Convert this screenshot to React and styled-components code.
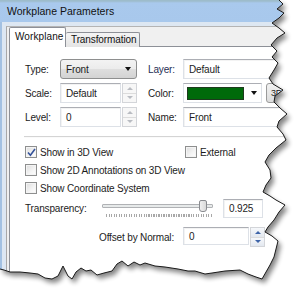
import React from 'react';
import styled, { createGlobalStyle } from 'styled-components';

const GlobalStyle = createGlobalStyle`
  html, body {
    margin: 0;
    padding: 0;
    background: #fff;
  }
  body {
    width: 295px;
    height: 289px;
    overflow: hidden;
    font-family: "Liberation Sans", Arial, sans-serif;
    font-size: 10px;
    letter-spacing: -0.15px;
    color: #1c1c1c;
  }
`;

const Stage = styled.div`
  position: relative;
  width: 295px;
  height: 289px;
  overflow: hidden;
  background: #fff;
`;

const Window = styled.div`
  width: 330px;
  height: 289px;
  display: flex;
  flex-direction: column;
`;

const TitleBar = styled.div`
  height: 22px;
  flex: none;
  box-sizing: border-box;
  padding: 5px 0 0 7px;
  background: linear-gradient(#9dbccb 0, #9dbccb 1px, #a9c9ed 3px, #a8c8ec 100%);
  font-size: 10.5px;
  letter-spacing: 0;
  color: #111;
`;

const Frame = styled.div`
  flex: 1;
  display: flex;
  padding: 4px 0 0 4px;
  background: #dde7f2;
  border-left: 2px solid #a3c1e2;
`;

const Client = styled.div`
  flex: 1;
  display: flex;
  flex-direction: column;
  padding: 1px 0 0 2px;
  background: #f0f0f0;
  border-top: 1px solid #b4b4b4;
  border-left: 1px solid #a8a8a8;
`;

const TabStrip = styled.div`
  display: flex;
  align-items: flex-end;
  height: 19px;
  position: relative;
  z-index: 1;
  margin-bottom: -1px;
`;

const Tab = styled.div`
  box-sizing: border-box;
  width: ${p => (p.$active ? 57 : 74)}px;
  height: ${p => (p.$active ? 20 : 15)}px;
  padding: ${p => (p.$active ? '3px 0 0 5px' : '1px 0 0 5px')};
  border: 1px solid #8d9097;
  border-bottom: none;
  border-left: ${p => (p.$active ? '1px solid #8d9097' : 'none')};
  border-radius: 2px 2px 0 0;
  background: ${p => (p.$active ? '#fff' : 'linear-gradient(#f4f4f4, #e4e4e4)')};
  font-size: 10px;
  letter-spacing: ${p => (p.$active ? 0.1 : -0.1)}px;
  color: #111;
`;

const Panel = styled.div`
  flex: 1;
  background: #fff;
  border: 1px solid #8d9097;
  padding: 12px 0 0 15px;
`;

const FieldGrid = styled.div`
  display: grid;
  grid-template-columns: 35px 77px 46px 130px;
  grid-auto-rows: 20px;
  row-gap: 4px;
  align-items: center;
`;

const Label = styled.span`
  flex: none;
  width: ${p => (p.$width ? `${p.$width}px` : 'auto')};
  padding-left: ${p => (p.$indent ? 11 : 0)}px;
  white-space: nowrap;
  color: ${p => (p.$blue ? '#1f2f55' : '#1c1c1c')};
`;

const Combo = styled.div`
  box-sizing: border-box;
  height: 20px;
  display: flex;
  align-items: center;
  justify-content: space-between;
  padding: 0 5px 0 5px;
  border: 1px solid #8e8f8f;
  border-radius: 3px;
  background: linear-gradient(#f3f3f3, #ececec 48%, #dedede 52%, #d3d3d3);
`;

const DownArrow = styled.span`
  width: 0;
  height: 0;
  border-left: 3.5px solid transparent;
  border-right: 3.5px solid transparent;
  border-top: 4px solid #111;
`;

const SpinField = styled.div`
  display: flex;
  gap: 1px;
  height: 20px;
  width: ${p => p.$width || 77}px;
`;

const TextBox = styled.div`
  box-sizing: border-box;
  flex: ${p => (p.$width ? 'none' : 1)};
  height: ${p => p.$height || 20}px;
  width: ${p => (p.$width ? `${p.$width}px` : 'auto')};
  display: flex;
  align-items: center;
  padding-left: 5px;
  background: #fff;
  border: 1px solid #dde1e7;
  border-top-color: #acaeb4;
  box-shadow: inset 1px 1px 0 #f3f3f3;
  white-space: nowrap;
  overflow: hidden;
`;

const Spinner = styled.div`
  box-sizing: border-box;
  width: 15px;
  display: flex;
  flex-direction: column;
  border: 1px solid #d3d5d9;
  background: #f7f7f7;
`;

const SpinButton = styled.div`
  flex: 1;
  display: flex;
  align-items: center;
  justify-content: center;
  border-top: ${p => (p.$down ? '1px solid #dcdcdc' : 'none')};
  background: ${p => (p.$active ? 'linear-gradient(#f6f8fb, #e3e8ef)' : 'transparent')};
`;

const SpinArrow = styled.span`
  width: 0;
  height: 0;
  border-left: 3px solid transparent;
  border-right: 3px solid transparent;
  ${p => (p.$down ? 'border-top' : 'border-bottom')}: 3px solid ${p => (p.$active ? '#3e64a8' : '#b9bcc2')};
`;

const ColorRow = styled.div`
  display: flex;
  align-items: center;
  gap: 4px;
`;

const ColorCombo = styled.div`
  box-sizing: border-box;
  width: 79px;
  height: 20px;
  display: flex;
  align-items: center;
  gap: 7px;
  padding: 0 4px 0 3px;
  background: #fff;
  border: 1px solid #dde1e7;
  border-top-color: #acaeb4;
`;

const Swatch = styled.span`
  box-sizing: border-box;
  width: 57px;
  height: 13px;
  background: ${p => p.$color};
  border: 1px solid #1d3a1d;
`;

const SmallButton = styled.div`
  box-sizing: border-box;
  height: 20px;
  padding: 4px 4px 0;
  border: 1px solid #9a9a9a;
  border-radius: 3px;
  background: linear-gradient(#f2f2f2, #dcdcdc);
  font-size: 9px;
`;

const Separator = styled.div`
  margin: 9px 0 0 -1px;
  height: 1px;
  background: #d4d4d4;
  box-shadow: 0 1px 0 #fafafa;
`;

const CheckGrid = styled.div`
  display: grid;
  grid-template-columns: 160px auto;
  grid-auto-rows: 18px;
  align-items: center;
  margin-top: 6px;
`;

const CheckItem = styled.label`
  display: flex;
  align-items: center;
  gap: 3px;
  white-space: nowrap;
  grid-column: ${p => (p.$wide ? '1 / span 2' : 'auto')};
`;

const Box = styled.span`
  box-sizing: border-box;
  width: 12px;
  height: 12px;
  display: flex;
  align-items: center;
  justify-content: center;
  border: 1px solid #8e8f8f;
  background: linear-gradient(135deg, #dcdcdc, #f4f4f4 60%, #fff);
  box-shadow: inset 0 0 0 1px #f4f4f4;
`;

const SliderRow = styled.div`
  display: flex;
  align-items: center;
  height: 20px;
  margin-top: 1px;
`;

const Slider = styled.div`
  position: relative;
  width: 115px;
  height: 20px;
  margin: 0 8px 0 0;
`;

const Track = styled.div`
  position: absolute;
  left: 2px;
  right: 2px;
  top: 6px;
  height: 2px;
  background: #e7eaea;
  border: 1px solid #b0b2b5;
  border-radius: 1px;
`;

const Ticks = styled.div`
  position: absolute;
  left: 6px;
  right: 3px;
  top: 16px;
  height: 3px;
  background: repeating-linear-gradient(90deg, #a8a8a8 0 1px, transparent 1px 2.5px);
`;

const Thumb = styled.div`
  position: absolute;
  top: 2px;
  left: ${p => p.$pos}%;
  width: 6px;
  height: 10px;
  border: 1px solid #8a8c90;
  border-radius: 2px 2px 3px 3px;
  background: linear-gradient(90deg, #f0f0f0, #dadada);
`;

const OffsetRow = styled.div`
  display: flex;
  align-items: center;
  height: 18px;
  margin-top: 10px;
  padding-left: 74px;
`;

const Check = () => (
  <svg width="9" height="9" viewBox="0 0 9 9">
    <path d="M1 4.5 L3.4 7.2 L8 1" fill="none" stroke="#34529a" strokeWidth="1.6" />
  </svg>
);

const Spin = ({ active }) => (
  <Spinner>
    <SpinButton $active={active}><SpinArrow $active={active} /></SpinButton>
    <SpinButton $active={active} $down><SpinArrow $active={active} $down /></SpinButton>
  </Spinner>
);

const TornLayer = styled.svg`
  position: absolute;
  left: 0;
  top: 0;
  pointer-events: none;
`;

// the torn paper edge, right side top to bottom, then bottom side right to left
const rightEdge = [
  [279, 0], [283, 4], [277, 9], [284, 13], [279, 18], [272, 23], [279, 28], [285, 33],
  [277, 38], [271, 45], [277, 51], [272, 57], [278, 63], [274, 70], [269, 78], [273, 84],
  [283, 90], [275, 96], [274, 102], [280, 108], [287, 114], [279, 121], [277, 127],
  [283, 134], [286, 140], [276, 148], [269, 155], [265, 162], [270, 170], [271, 178],
  [266, 185], [263, 192], [270, 196], [276, 200], [285, 205], [279, 212], [274, 220],
  [268, 227], [265, 232], [272, 236], [278, 241], [276, 249], [274, 257], [270, 265],
  [266, 272], [262, 279],
];

const bottomEdge = [
  [256, 277], [248, 274], [240, 270], [225, 271], [212, 273], [205, 274], [195, 271],
  [188, 271], [178, 269], [165, 267], [155, 266], [145, 263], [140, 265], [134, 262],
  [128, 266], [122, 261], [117, 264], [112, 271], [104, 273], [97, 275], [91, 270],
  [86, 271], [81, 268], [76, 272], [72, 279], [68, 276], [63, 266], [58, 276], [52, 279],
  [45, 278], [38, 274], [30, 273], [20, 272], [10, 272], [4, 270], [0, 269],
];

const edge = [...rightEdge, ...bottomEdge];
const edgePath = 'M' + edge.map(([x, y]) => `${x},${y}`).join(' L');
const keptShape = 'M0,0 L' + edge.map(([x, y]) => `${x},${y}`).join(' L') + ' Z';
const outside = 'M-5,-5 H300 V294 H-5 Z ' + keptShape;

const TornEdge = () => (
  <TornLayer width="295" height="289" viewBox="0 0 295 289">
    <defs>
      <clipPath id="outside">
        <path d={outside} clipRule="evenodd" />
      </clipPath>
      <filter id="soft" x="-10%" y="-10%" width="120%" height="120%">
        <feGaussianBlur stdDeviation="2.6" />
      </filter>
    </defs>
    <path d={outside} fill="#fff" fillRule="evenodd" />
    <g clipPath="url(#outside)">
      <path d={keptShape} fill="#000" opacity="0.48" filter="url(#soft)" transform="translate(3 4)" />
    </g>
    <path d={edgePath} fill="none" stroke="#1a1a1a" strokeWidth="1" strokeLinejoin="round" />
  </TornLayer>
);

export default function App() {
  return (
    <Stage>
      <GlobalStyle />
      <Window>
        <TitleBar>Workplane Parameters</TitleBar>
        <Frame>
          <Client>
            <TabStrip>
              <Tab $active>Workplane</Tab>
              <Tab>Transformation</Tab>
            </TabStrip>
            <Panel>
              <FieldGrid>
                <Label>Type:</Label>
                <Combo>Front<DownArrow /></Combo>
                <Label $indent $blue>Layer:</Label>
                <TextBox>Default</TextBox>

                <Label>Scale:</Label>
                <SpinField>
                  <TextBox>Default</TextBox>
                  <Spin />
                </SpinField>
                <Label $indent>Color:</Label>
                <ColorRow>
                  <ColorCombo>
                    <Swatch $color="#006a0a" />
                    <DownArrow />
                  </ColorCombo>
                  <SmallButton>3D</SmallButton>
                </ColorRow>

                <Label>Level:</Label>
                <SpinField>
                  <TextBox>0</TextBox>
                  <Spin />
                </SpinField>
                <Label $indent>Name:</Label>
                <TextBox>Front</TextBox>
              </FieldGrid>

              <Separator />

              <CheckGrid>
                <CheckItem><Box><Check /></Box>Show in 3D View</CheckItem>
                <CheckItem><Box />External</CheckItem>
                <CheckItem $wide><Box />Show 2D Annotations on 3D View</CheckItem>
                <CheckItem $wide><Box />Show Coordinate System</CheckItem>
              </CheckGrid>

              <SliderRow>
                <Label $width={75}>Transparency:</Label>
                <Slider>
                  <Track />
                  <Ticks />
                  <Thumb $pos={86} />
                </Slider>
                <TextBox $width={40} $height={19}>0.925</TextBox>
              </SliderRow>

              <OffsetRow>
                <Label $width={84}>Offset by Normal:</Label>
                <SpinField $width={82}>
                  <TextBox $height={18}>0</TextBox>
                  <Spin active />
                </SpinField>
              </OffsetRow>
            </Panel>
          </Client>
        </Frame>
      </Window>
      <TornEdge />
    </Stage>
  );
}
